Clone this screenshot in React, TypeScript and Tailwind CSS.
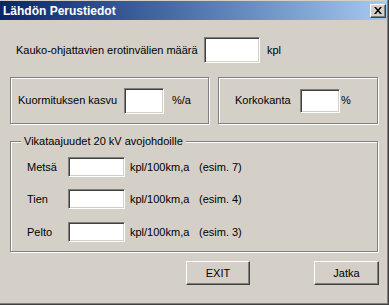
import { ReactNode } from "react";

const Field = ({ w, h }: { w: string; h: string }) => (
  <div
    className={`${w} ${h} shrink-0 bg-white border border-t-[#808080] border-l-[#808080] border-b-white border-r-white shadow-[inset_1px_1px_0_#404040,inset_-1px_-1px_0_#d4d0c8]`}
  />
);

const Button = ({ children, w }: { children: ReactNode; w: string }) => (
  <button
    className={`${w} h-[24px] border border-t-white border-l-white border-b-[#404040] border-r-[#404040] shadow-[inset_-1px_-1px_0_#808080] bg-[#d4d0c8] text-[11px] text-black`}
  >
    {children}
  </button>
);

const Row = ({ label, hint, className }: { label: string; hint: string; className: string }) => (
  <div className={`flex items-center ${className}`}>
    <span className="w-[41px] pl-[16px] box-content shrink-0">{label}</span>
    <Field w="w-[57px]" h="h-[20px]" />
    <span className="ml-[5px] w-[69px] shrink-0">kpl/100km,a</span>
    <span>{hint}</span>
  </div>
);

const App = () => {
  return (
    <div
      className="w-[389px] h-[305px] bg-[#d4d0c8] border-r border-b border-[#404040] text-[11px] text-black overflow-hidden"
      style={{ fontFamily: '"Liberation Sans", Arial, sans-serif' }}
    >
      <div className="h-full flex flex-col border-r border-b border-[#808080] pt-px">
        <div className="h-[19px] flex items-center justify-between bg-gradient-to-r from-[#0a246a] to-[#a6caf0] pl-[3px] pr-px">
          <span className="text-white font-bold text-[12px]">Lähdön Perustiedot</span>
          <div className="w-[16px] h-[14px] bg-[#d4d0c8] border border-t-white border-l-white border-b-[#404040] border-r-[#404040] shadow-[inset_-1px_-1px_0_#808080] flex items-center justify-center">
            <svg width="8" height="7" viewBox="0 0 8 7">
              <path d="M0 0h2l2 2.5L6 0h2L5 3.5 8 7H6L4 4.5 2 7H0l3-3.5z" fill="#000" />
            </svg>
          </div>
        </div>

        <div className="flex flex-col pl-[10px] pr-[9px]">
          <div className="flex items-center mt-[17px]">
            <span className="w-[194px] pl-[6px] box-border shrink-0">Kauko-ohjattavien erotinvälien määrä</span>
            <Field w="w-[56px]" h="h-[26px]" />
            <span className="ml-[7px]">kpl</span>
          </div>

          <div className="flex mt-[14px]">
            <div className="w-[199px] h-[47px] border border-[#808080] shadow-[1px_1px_0_white,inset_1px_1px_0_white] flex items-center pl-[7px]">
              <span className="w-[106px] shrink-0">Kuormituksen kasvu</span>
              <Field w="w-[40px]" h="h-[26px]" />
              <span className="ml-[8px]">%/a</span>
            </div>
            <div className="ml-[9px] flex-1 h-[47px] border border-[#808080] shadow-[1px_1px_0_white,inset_1px_1px_0_white] flex items-center pl-[16px]">
              <span className="w-[65px] shrink-0">Korkokanta</span>
              <Field w="w-[40px]" h="h-[24px]" />
              <span className="ml-px">%</span>
            </div>
          </div>

          <div className="relative mt-[17px] h-[111px] border border-[#808080] shadow-[1px_1px_0_white,inset_1px_1px_0_white]">
            <span className="absolute left-[10px] -top-[8px] px-[3px] bg-[#d4d0c8] leading-[14px]">
              Vikataajuudet 20 kV avojohdoille
            </span>
            <Row label="Metsä" hint="(esim. 7)" className="mt-[15px]" />
            <Row label="Tien" hint="(esim. 4)" className="mt-[12px]" />
            <Row label="Pelto" hint="(esim. 3)" className="mt-[13px]" />
          </div>

          <div className="flex mt-[9px]">
            <div className="ml-[176px]">
              <Button w="w-[64px]">EXIT</Button>
            </div>
            <div className="ml-[64px]">
              <Button w="w-[65px]">Jatka</Button>
            </div>
          </div>
        </div>
      </div>
    </div>
  );
};

export default App;
